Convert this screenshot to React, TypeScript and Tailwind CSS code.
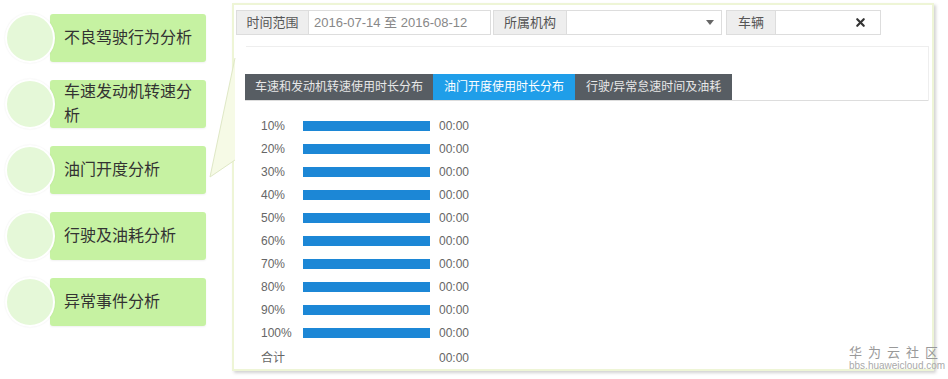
import { X } from "lucide-react";

const MENU = ["不良驾驶行为分析", "车速发动机转速分析", "油门开度分析", "行驶及油耗分析", "异常事件分析"];
const ROWS = ["10%", "20%", "30%", "40%", "50%", "60%", "70%", "80%", "90%", "100%"];
const TABS = [
  { label: "车速和发动机转速使用时长分布", cls: "bg-[#575d63] text-[#e8e8e8] px-[10px]" },
  { label: "油门开度使用时长分布", cls: "bg-[#1f9ee9] text-white px-[11px]" },
  { label: "行驶/异常怠速时间及油耗", cls: "bg-[#575d63] text-[#e8e8e8] px-[11px]" },
];

const FONT = "font-['Liberation_Sans','Noto_Sans_CJK_SC',sans-serif]";

export default function App() {
  return (
    <div className={`relative w-[948px] h-[379px] bg-white flex ${FONT}`}>
      {/* 左侧菜单 */}
      <div className="w-[206px] shrink-0 pt-[14px] pl-[5px] flex flex-col gap-[18px]">
        {MENU.map((m) => (
          <div key={m} className="flex items-center h-12">
            <div className="relative z-10 w-[50px] h-[50px] shrink-0 rounded-full bg-[#e5f8d8] border-2 border-white shadow-[0_0_2px_rgba(0,0,0,0.08)]" />
            <div className="-ml-[5px] w-[156px] h-12 shrink-0 rounded-[3px] bg-[#c6f2a2] pl-[14px] pr-1 flex items-center text-[16px] leading-6 text-[#333] shadow-[0_1px_2px_rgba(0,0,0,0.06)]">
              {m}
            </div>
          </div>
        ))}
      </div>

      {/* 指向箭头 */}
      <svg className="absolute left-[208px] top-[55px]" width="30" height="125" viewBox="0 0 30 125">
        <polygon points="27,3 2,122 27,105" fill="#f6fae6" />
        <polyline points="27,3 2,122 27,105" fill="none" stroke="#dfe8c6" strokeWidth="1" />
      </svg>

      {/* 主面板 */}
      <div className="mt-[3px] ml-[26px] w-[702px] h-[368px] shrink-0 border-2 border-[#eef5d6] bg-white shadow-[2px_2px_3px_rgba(0,0,0,0.18)] pt-[5px] pl-[2px] flex flex-col text-[12px] text-[#666]">
        {/* 筛选条件 */}
        <div className="flex h-[25px] text-[13px]">
          <div className="w-[73px] bg-[#eee] border border-[#ddd] flex items-center justify-center text-[#555]">时间范围</div>
          <div className="w-[182px] border border-l-0 border-[#ddd] flex items-center pl-[5px] text-[#888]">2016-07-14 至 2016-08-12</div>
          <div className="ml-[2px] w-[74px] bg-[#eee] border border-[#ddd] flex items-center justify-center text-[#555]">所属机构</div>
          <div className="w-[155px] border border-l-0 border-[#ddd] flex items-center justify-end pr-[7px]">
            <svg width="8" height="5" viewBox="0 0 8 5"><polygon points="0,0 8,0 4,5" fill="#666" /></svg>
          </div>
          <div className="ml-[4px] w-[50px] bg-[#eee] border border-[#ddd] flex items-center justify-center text-[#555]">车辆</div>
          <div className="w-[105px] border border-l-0 border-[#ddd] flex items-center justify-end pr-[13px]">
            <X className="w-[13px] h-[13px] text-[#333]" strokeWidth={4} />
          </div>
        </div>

        <div className="mt-[11px] ml-[10px] mr-[3px] h-[55px] border-t border-r border-[#eee] flex flex-col justify-end">
          {/* 标签页 */}
          <div className="-ml-[1px] flex border-b border-[#ddd]">
            {TABS.map((t) => (
              <div key={t.label} className={`h-[26px] flex items-center text-[12px] ${t.cls}`}>
                {t.label}
              </div>
            ))}
          </div>
        </div>

        {/* 分布条形 */}
        <div className="mt-[13px] ml-[25px] flex flex-col">
          {ROWS.map((r) => (
            <div key={r} className="h-[23px] flex items-center">
              <span className="w-[42px]">{r}</span>
              <div className="w-[127px] h-[10px] bg-[#1c87d6]" />
              <span className="ml-[9px]">00:00</span>
            </div>
          ))}
          <div className="mt-[2px] h-[23px] flex items-center">
            <span className="w-[178px]">合计</span>
            <span>00:00</span>
          </div>
        </div>
      </div>

      {/* 水印 */}
      <div className="absolute left-[849px] top-[345px] flex flex-col text-[#999]">
        <span className="text-[13px] leading-[15px] tracking-[6px]">华为云社区</span>
        <span className="text-[10px] leading-[12px] text-[#aaa]">bbs.huaweicloud.com</span>
      </div>
    </div>
  );
}
